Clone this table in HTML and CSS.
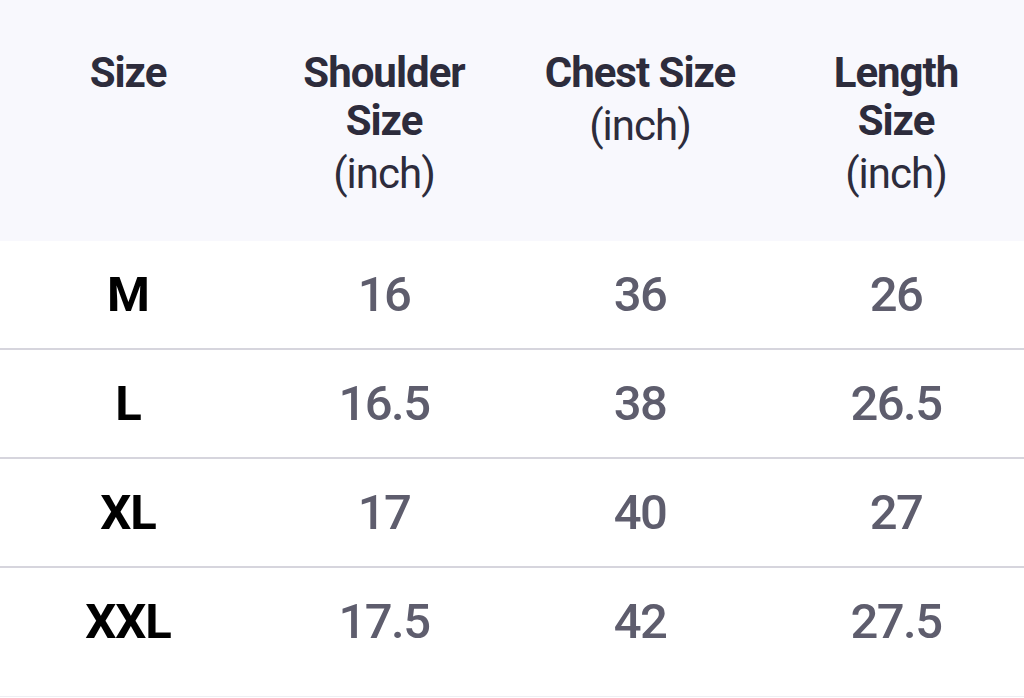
FILE: index.html
```html
<!DOCTYPE html>
<html lang="en">
<head>
<meta charset="utf-8">
<title>Size Chart</title>
<link rel="stylesheet" href="styles.css">
</head>
<body>
<table class="chart">
  <thead>
    <tr class="head-row">
      <th><span class="hd">Size</span></th>
      <th><span class="hd">Shoulder<br>Size</span><span class="unit">(inch)</span></th>
      <th><span class="hd">Chest Size</span><span class="unit">(inch)</span></th>
      <th><span class="hd">Length<br>Size</span><span class="unit">(inch)</span></th>
    </tr>
  </thead>
  <tbody>
    <tr class="row first"><td class="size">M</td><td>16</td><td>36</td><td>26</td></tr>
    <tr class="row"><td class="size">L</td><td>16.5</td><td>38</td><td>26.5</td></tr>
    <tr class="row"><td class="size">XL</td><td>17</td><td>40</td><td>27</td></tr>
    <tr class="row last"><td class="size">XXL</td><td>17.5</td><td>42</td><td>27.5</td></tr>
  </tbody>
</table>
</body>
</html>
```

FILE: styles.css
```css
html, body {
  margin: 0;
  padding: 0;
  background: #ffffff;
}

body {
  font-family: Roboto, "Liberation Sans", sans-serif;
}

.chart {
  width: 1024px;
  border-collapse: collapse;
  table-layout: fixed;
}

.head-row {
  background: #f8f8fd;
  height: 241px;
}

.head-row th {
  vertical-align: top;
  padding: 49px 0 0 0;
  text-align: center;
  color: #2d2c3c;
}

.hd {
  display: block;
  font-size: 42px;
  font-weight: 700;
  line-height: 48px;
  letter-spacing: -1px;
}

.unit {
  display: block;
  font-size: 42px;
  font-weight: 400;
  line-height: 48px;
  letter-spacing: -1px;
  margin-top: 5px;
}

.row {
  height: 109px;
  border-bottom: 2px solid #d6d5dd;
}

.row.first {
  height: 108px;
}

.row td {
  text-align: center;
  vertical-align: middle;
  padding: 0;
  font-size: 49px;
  font-weight: 500;
  letter-spacing: -1.5px;
  color: #5e5d6d;
}

.row td.size {
  color: #000000;
  font-weight: 700;
  letter-spacing: -1px;
}

.row.last {
  height: 129px;
  border-bottom: 1px solid #eeeef3;
}

.row.last td {
  padding-bottom: 20px;
}
```
